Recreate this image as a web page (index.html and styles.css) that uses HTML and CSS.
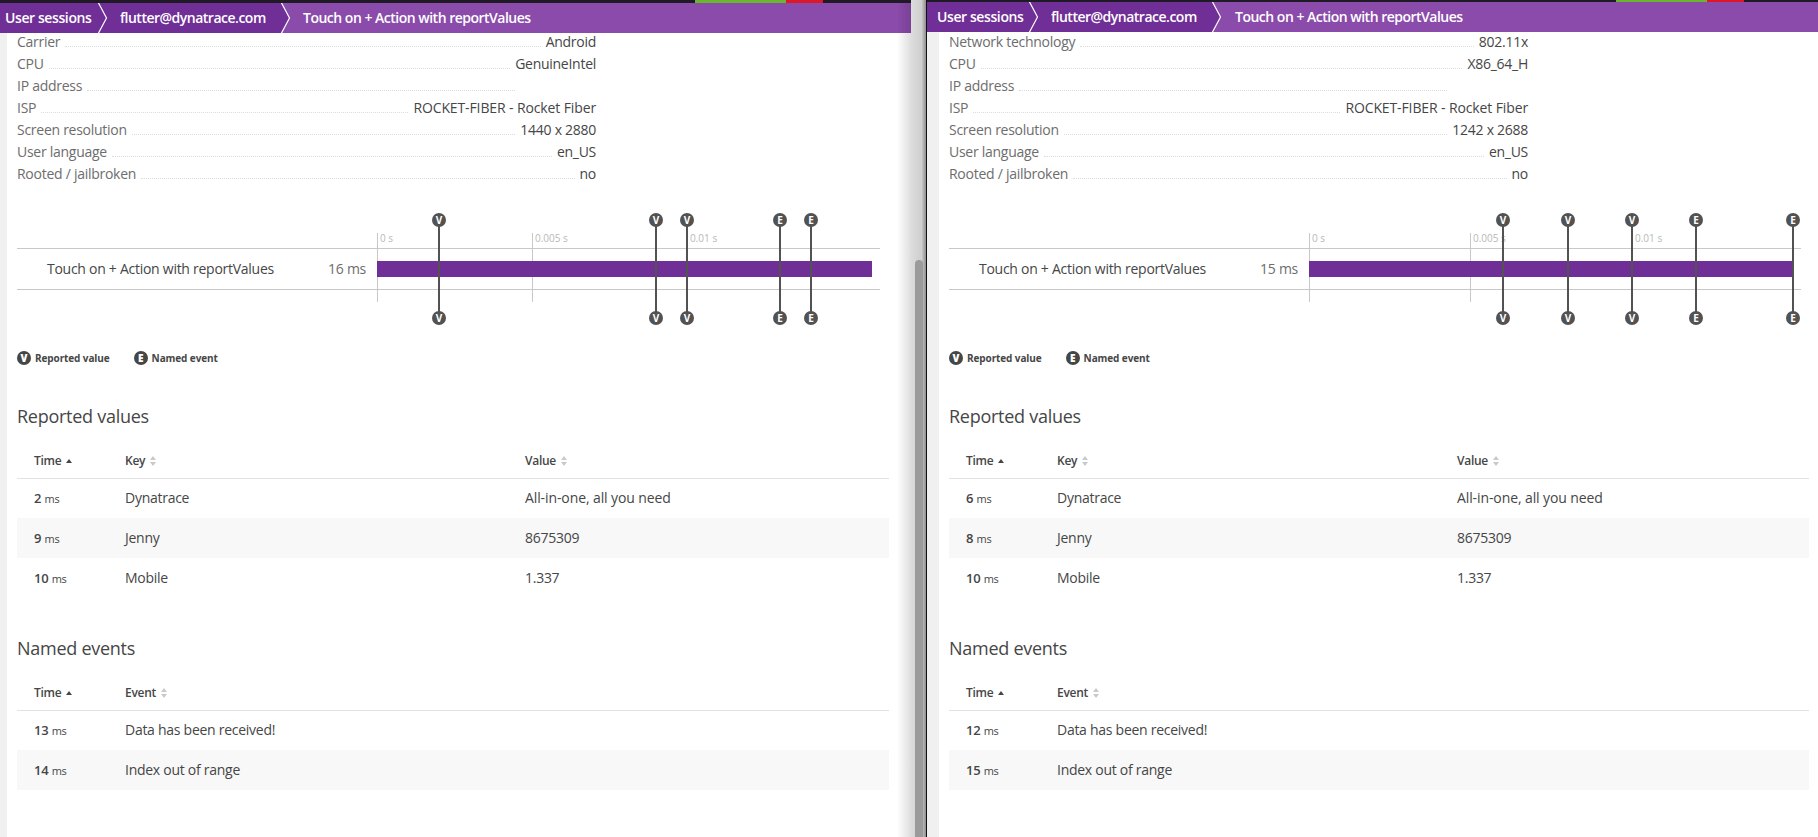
FILE: index.html
```html
<!DOCTYPE html>
<html lang="en">
<head>
    <meta charset="UTF-8">
    <title>User sessions - Touch on + Action with reportValues</title>
    <link rel="stylesheet" href="styles.css">
</head>
<body>
    <svg class="defs" width="0" height="0">
        <symbol id="sort-both" viewBox="0 0 6 10">
            <path d="M3 0l3 4H0z M3 10L0 6h6z" fill="#c9c9c9"/>
        </symbol>
        <symbol id="sort-up" viewBox="0 0 6 4">
            <path d="M3 0l3 4H0z" fill="#454646"/>
        </symbol>
    </svg>

    <section class="window window-left">
        <div class="status-line">
            <span class="status-ok"></span>
            <span class="status-bad"></span>
        </div>
        <nav class="crumbs">
            <a class="crumb crumb-first">User sessions</a>
            <a class="crumb crumb-second">flutter@dynatrace.com</a>
            <span class="crumb-current">Touch on + Action with reportValues</span>
            <svg class="crumb-arrow arrow-one" width="11" height="30" viewBox="0 0 11 30"><path d="M1 -1L9.5 15L1 31" fill="none" stroke="#fff" stroke-width="1.2"/></svg>
            <svg class="crumb-arrow arrow-two" width="11" height="30" viewBox="0 0 11 30"><path d="M1 -1L9.5 15L1 31" fill="none" stroke="#fff" stroke-width="1.2"/></svg>
        </nav>
        <div class="content">
            <div class="props">
                <div class="prop"><span class="prop-key">Carrier</span><i></i><span>Android</span></div>
                <div class="prop"><span class="prop-key">CPU</span><i></i><span>GenuineIntel</span></div>
                <div class="prop"><span class="prop-key">IP address</span><i></i><span class="prop-blank"></span></div>
                <div class="prop"><span class="prop-key">ISP</span><i></i><span class="prop-wide">ROCKET-FIBER - Rocket Fiber</span></div>
                <div class="prop"><span class="prop-key">Screen resolution</span><i></i><span>1440 x 2880</span></div>
                <div class="prop"><span class="prop-key">User language</span><i></i><span>en_US</span></div>
                <div class="prop"><span class="prop-key">Rooted / jailbroken</span><i></i><span>no</span></div>
            </div>

            <div class="timeline">
                <div class="tl-row">
                    <span class="tl-name">Touch on + Action with reportValues</span>
                    <span class="tl-time">16 ms</span>
                    <div class="tl-bar-wrap"><div class="tl-bar" style="width: 495px"></div></div>
                </div>
                <div class="tl-track">
                    <div class="tick" style="left: 0px"><span>0 s</span></div>
                    <div class="tick" style="left: 155px"><span>0.005 s</span></div>
                    <div class="tick" style="left: 310px"><span>0.01 s</span></div>
                    <div class="marker" style="left: 62px"><b>V</b><b>V</b></div>
                    <div class="marker" style="left: 279px"><b>V</b><b>V</b></div>
                    <div class="marker" style="left: 310px"><b>V</b><b>V</b></div>
                    <div class="marker" style="left: 403px"><b>E</b><b>E</b></div>
                    <div class="marker" style="left: 434px"><b>E</b><b>E</b></div>
                </div>
            </div>

            <div class="legend">
                <span class="legend-item"><b>V</b>Reported value</span>
                <span class="legend-item"><b>E</b>Named event</span>
            </div>

            <h2>Reported values</h2>
            <table>
                <thead>
                    <tr>
                        <th class="col-time">Time <svg class="sort-up"><use href="#sort-up"/></svg></th>
                        <th class="col-key">Key <svg class="sort-both"><use href="#sort-both"/></svg></th>
                        <th>Value <svg class="sort-both"><use href="#sort-both"/></svg></th>
                    </tr>
                </thead>
                <tbody>
                    <tr><td class="col-time"><b>2</b> <small>ms</small></td><td>Dynatrace</td><td class="val-wide">All-in-one, all you need</td></tr>
                    <tr><td class="col-time"><b>9</b> <small>ms</small></td><td>Jenny</td><td>8675309</td></tr>
                    <tr><td class="col-time"><b>10</b> <small>ms</small></td><td>Mobile</td><td>1.337</td></tr>
                </tbody>
            </table>

            <h2 class="h2-next">Named events</h2>
            <table>
                <thead>
                    <tr>
                        <th class="col-time">Time <svg class="sort-up"><use href="#sort-up"/></svg></th>
                        <th>Event <svg class="sort-both"><use href="#sort-both"/></svg></th>
                    </tr>
                </thead>
                <tbody>
                    <tr><td class="col-time"><b>13</b> <small>ms</small></td><td>Data has been received!</td></tr>
                    <tr><td class="col-time"><b>14</b> <small>ms</small></td><td>Index out of range</td></tr>
                </tbody>
            </table>
        </div>
        <div class="window-shade"></div>
    </section>

    <div class="gutter"><div class="scroll-thumb"></div></div>

    <section class="window window-right">
        <div class="status-line">
            <span class="status-ok"></span>
            <span class="status-bad"></span>
        </div>
        <nav class="crumbs">
            <a class="crumb crumb-first">User sessions</a>
            <a class="crumb crumb-second">flutter@dynatrace.com</a>
            <span class="crumb-current">Touch on + Action with reportValues</span>
            <svg class="crumb-arrow arrow-one" width="11" height="30" viewBox="0 0 11 30"><path d="M1 -1L9.5 15L1 31" fill="none" stroke="#fff" stroke-width="1.2"/></svg>
            <svg class="crumb-arrow arrow-two" width="11" height="30" viewBox="0 0 11 30"><path d="M1 -1L9.5 15L1 31" fill="none" stroke="#fff" stroke-width="1.2"/></svg>
        </nav>
        <div class="content">
            <div class="props">
                <div class="prop"><span class="prop-key">Network technology</span><i></i><span>802.11x</span></div>
                <div class="prop"><span class="prop-key">CPU</span><i></i><span>X86_64_H</span></div>
                <div class="prop"><span class="prop-key">IP address</span><i></i><span class="prop-blank"></span></div>
                <div class="prop"><span class="prop-key">ISP</span><i></i><span class="prop-wide">ROCKET-FIBER - Rocket Fiber</span></div>
                <div class="prop"><span class="prop-key">Screen resolution</span><i></i><span>1242 x 2688</span></div>
                <div class="prop"><span class="prop-key">User language</span><i></i><span>en_US</span></div>
                <div class="prop"><span class="prop-key">Rooted / jailbroken</span><i></i><span>no</span></div>
            </div>

            <div class="timeline">
                <div class="tl-row">
                    <span class="tl-name">Touch on + Action with reportValues</span>
                    <span class="tl-time">15 ms</span>
                    <div class="tl-bar-wrap"><div class="tl-bar" style="width: 484px"></div></div>
                </div>
                <div class="tl-track">
                    <div class="tick" style="left: 0px"><span>0 s</span></div>
                    <div class="tick" style="left: 161px"><span>0.005 s</span></div>
                    <div class="tick" style="left: 323px"><span>0.01 s</span></div>
                    <div class="marker" style="left: 194px"><b>V</b><b>V</b></div>
                    <div class="marker" style="left: 259px"><b>V</b><b>V</b></div>
                    <div class="marker" style="left: 323px"><b>V</b><b>V</b></div>
                    <div class="marker" style="left: 387px"><b>E</b><b>E</b></div>
                    <div class="marker" style="left: 484px"><b>E</b><b>E</b></div>
                </div>
            </div>

            <div class="legend">
                <span class="legend-item"><b>V</b>Reported value</span>
                <span class="legend-item"><b>E</b>Named event</span>
            </div>

            <h2>Reported values</h2>
            <table>
                <thead>
                    <tr>
                        <th class="col-time">Time <svg class="sort-up"><use href="#sort-up"/></svg></th>
                        <th class="col-key">Key <svg class="sort-both"><use href="#sort-both"/></svg></th>
                        <th>Value <svg class="sort-both"><use href="#sort-both"/></svg></th>
                    </tr>
                </thead>
                <tbody>
                    <tr><td class="col-time"><b>6</b> <small>ms</small></td><td>Dynatrace</td><td class="val-wide">All-in-one, all you need</td></tr>
                    <tr><td class="col-time"><b>8</b> <small>ms</small></td><td>Jenny</td><td>8675309</td></tr>
                    <tr><td class="col-time"><b>10</b> <small>ms</small></td><td>Mobile</td><td>1.337</td></tr>
                </tbody>
            </table>

            <h2 class="h2-next">Named events</h2>
            <table>
                <thead>
                    <tr>
                        <th class="col-time">Time <svg class="sort-up"><use href="#sort-up"/></svg></th>
                        <th>Event <svg class="sort-both"><use href="#sort-both"/></svg></th>
                    </tr>
                </thead>
                <tbody>
                    <tr><td class="col-time"><b>12</b> <small>ms</small></td><td>Data has been received!</td></tr>
                    <tr><td class="col-time"><b>15</b> <small>ms</small></td><td>Index out of range</td></tr>
                </tbody>
            </table>
        </div>
    </section>
</body>
</html>
```

FILE: styles.css
```css
html, body {
    margin: 0;
    padding: 0;
    height: 837px;
    overflow: hidden;
}
body {
    display: flex;
    font-family: 'Open Sans', 'Noto Sans', sans-serif;
    font-size: 14px;
    letter-spacing: -0.27px;
    color: #454646;
    background-color: #fff;
}
.defs {
    position: absolute;
}

/* windows */
.window {
    position: relative;
    height: 837px;
    overflow: hidden;
    box-sizing: border-box;
}
.window-left {
    width: 911px;
    flex: none;
}
.window-right {
    flex: 1;
}
.status-line {
    height: 3px;
    background-color: #1f1a26;
    display: flex;
    padding-left: 695px;
}
.window-right .status-line {
    height: 2px;
    padding-left: 689px;
}
.status-ok {
    width: 91px;
    background-color: #6bb52f;
}
.status-bad {
    width: 37px;
    background-color: #dc172a;
}
.window-shade {
    position: absolute;
    top: 3px;
    right: 0;
    bottom: 0;
    width: 14px;
    background: linear-gradient(to right, rgba(0, 0, 0, 0), rgba(0, 0, 0, 0.13));
}
.gutter {
    position: relative;
    width: 16px;
    flex: none;
    box-sizing: border-box;
    border-right: 1px solid #111;
    background: linear-gradient(to right, #dcdcdc, #cfcfcf 70%, #8e8e8e);
}
.scroll-thumb {
    position: absolute;
    left: 4px;
    top: 260px;
    bottom: 0;
    width: 8px;
    border-radius: 4px 4px 0 0;
    background-color: #9b9b9b;
}

/* breadcrumbs */
.crumbs {
    position: relative;
    display: flex;
    height: 30px;
    line-height: 29px;
    color: #fff;
    font-weight: 600;
    letter-spacing: -0.5px;
    background-color: #8a4bab;
    white-space: nowrap;
}
.crumb {
    background-color: #702f96;
    box-sizing: border-box;
}
.crumb-first {
    width: 120px;
    padding-left: 5px;
    letter-spacing: -0.4px;
}
.crumb-second {
    width: 170px;
    clip-path: polygon(0 0, 161px 0, 170px 50%, 161px 100%, 0 100%);
}
.crumb-current {
    margin-left: 13px;
}
.crumb-arrow {
    position: absolute;
    top: 0;
}
.arrow-one {
    left: 97px;
}
.arrow-two {
    left: 280px;
}
.window-right .crumb-first {
    width: 124px;
    padding-left: 10px;
}
.window-right .crumb-current {
    margin-left: 14px;
}
.window-right .arrow-one {
    left: 101px;
}
.window-right .arrow-two {
    left: 284px;
}

/* properties */
.content {
    border-left: 7px solid #f0f0f0;
    padding-left: 10px;
    height: 100%;
}
.window-right .content {
    border-left-width: 12px;
    padding-top: 1px;
}
.props {
    width: 579px;
    margin-top: -2px;
}
.prop {
    display: flex;
    align-items: baseline;
    height: 22px;
    line-height: 22px;
}
.prop-key {
    color: #6d6d6d;
}
.prop i {
    flex: 1;
    margin: 0 5px;
    border-bottom: 1px dotted #dcdcdc;
}
.prop-blank {
    width: 76px;
}
.prop-wide {
    letter-spacing: -0.12px;
}

/* timeline */
.timeline {
    position: relative;
    height: 120px;
    margin-top: 25px;
    margin-right: 31px;
}
.window-right .timeline {
    margin-right: 17px;
}
.tl-row {
    position: absolute;
    z-index: 1;
    top: 38px;
    left: 0;
    right: 0;
    height: 42px;
    box-sizing: border-box;
    border-top: 1px solid #c8c8c8;
    border-bottom: 1px solid #c8c8c8;
    display: flex;
    align-items: center;
}
.tl-name {
    padding-left: 30px;
    width: 260px;
    box-sizing: border-box;
    white-space: nowrap;
    margin-top: -2px;
}
.tl-time {
    width: 89px;
    text-align: right;
    color: #6d6d6d;
    margin-top: -2px;
}
.tl-bar-wrap {
    margin-left: 11px;
    flex: 1;
}
.tl-bar {
    height: 16px;
    background-color: #702f96;
}
.tl-track {
    position: absolute;
    top: 0;
    left: 360px;
    right: 0;
    bottom: 0;
}
.tick {
    position: absolute;
    top: 23px;
    height: 69px;
    width: 1px;
    background-color: #c8c8c8;
}
.tick span {
    position: absolute;
    left: 3px;
    top: 0;
    font-size: 10px;
    line-height: 11px;
    color: #b8b8b8;
    white-space: nowrap;
    letter-spacing: 0;
}
.marker {
    position: absolute;
    z-index: 2;
    top: 10px;
    width: 2px;
    height: 98px;
    margin-left: -1px;
    background-color: #525252;
    display: flex;
    flex-direction: column;
    justify-content: space-between;
    align-items: center;
}
.marker b {
    flex: none;
    width: 14px;
    height: 14px;
    line-height: 14px;
    margin: -7px 0;
    border-radius: 50%;
    background-color: #525252;
    color: #fff;
    font-size: 10px;
    text-align: center;
    letter-spacing: 0;
}

/* legend */
.legend {
    display: flex;
    gap: 24px;
    margin-top: 21px;
    height: 14px;
    line-height: 14px;
    font-size: 10px;
    font-weight: 700;
    letter-spacing: -0.1px;
}
.legend-item {
    display: flex;
    gap: 4px;
}
.legend-item b {
    width: 14px;
    height: 14px;
    border-radius: 50%;
    background-color: #454646;
    color: #fff;
    font-size: 10px;
    text-align: center;
}

/* tables */
h2 {
    margin: 39px 0 0;
    font-size: 18px;
    font-weight: 400;
    line-height: 24px;
}
h2.h2-next {
    margin-top: 38px;
}
table {
    width: 872px;
    margin-top: 17px;
    border-collapse: collapse;
    table-layout: fixed;
}
.window-right table {
    width: 860px;
}
th {
    height: 33px;
    padding: 0 0 1px;
    box-sizing: border-box;
    text-align: left;
    font-size: 12px;
    font-weight: 600;
    border-bottom: 1px solid #e2e2e2;
}
td {
    height: 40px;
    padding: 0 0 2px;
    box-sizing: border-box;
}
tbody tr:nth-child(even) {
    background-color: #f8f8f8;
}
.col-time {
    padding-left: 17px;
}
th.col-time, td.col-time {
    width: 108px;
}
.col-key {
    width: 400px;
}
td.val-wide {
    letter-spacing: -0.1px;
}
td b {
    font-size: 13px;
    font-weight: 600;
}
td small {
    font-size: 11px;
}
.sort-up {
    width: 6px;
    height: 4px;
    margin-left: 2px;
    vertical-align: 2px;
}
.sort-both {
    width: 6px;
    height: 10px;
    margin-left: 2px;
    vertical-align: -1px;
}
```
